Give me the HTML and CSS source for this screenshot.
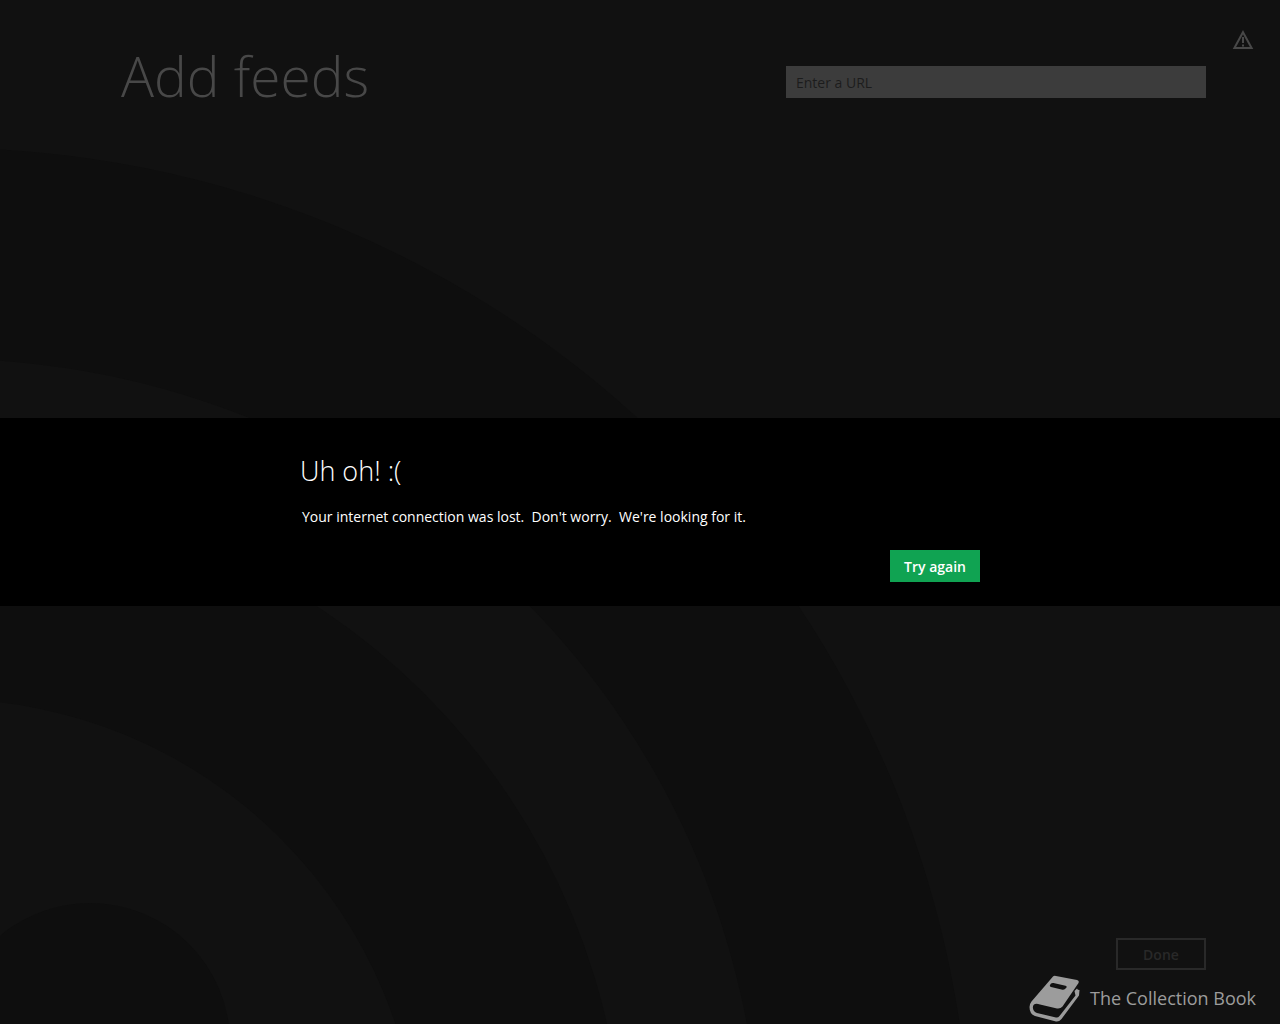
FILE: index.html
```html
<!DOCTYPE html>
<html lang="en">
<head>
  <meta charset="utf-8">
  <title>Add feeds</title>
  <link rel="stylesheet" href="styles.css">
</head>
<body>

  <!-- Big feed symbol behind the page -->
  <svg class="feed-bg" viewBox="0 0 1280 1024" preserveAspectRatio="xMinYMax slice" aria-hidden="true">
    <circle cx="-57" cy="1176" r="1028" fill="#0e0e0e"/>
    <circle cx="-55" cy="1175" r="816" fill="#111"/>
    <circle cx="-56" cy="1175" r="680" fill="#0e0e0e"/>
    <circle cx="-56" cy="1175" r="476" fill="#111"/>
    <circle cx="90" cy="1043" r="140" fill="#0e0e0e"/>
  </svg>

  <div class="page">
    <header class="header">
      <h1>Add feeds</h1>
      <input type="text" class="url-box" id="url" placeholder="Enter a URL" aria-label="Enter a URL">
      <svg class="warning-icon" viewBox="0 0 22 20" role="img" aria-label="Warning">
        <path d="M11 2.2 L19.6 18 H2.4 Z" fill="none" stroke="#484848" stroke-width="2"/>
        <path d="M11 7 V13 M11 14.5 V16.5" stroke="#484848" stroke-width="2"/>
      </svg>
    </header>

    <footer class="footer">
      <button class="done-button" disabled>Done</button>
      <div class="brand">
        <svg class="book-icon" viewBox="0 0 52 48" aria-hidden="true">
          <path fill="#9c9c9c" fill-rule="evenodd" d="M25 2.500 Q26 1.500 28 2 L49 6 Q51.500 6.600 50.500 9 L34.500 32.500 Q32.500 35 29 34.500 L12 30.500 Q8 29 6 30.500 Q4.500 32 5 34.500 Q5.500 37.500 9 39 L28 43.500 Q30 44 31.500 42 L47.500 21.500 L46.500 17 L49 14.500 Q49.500 16 51.500 16 L51 21.500 L33.500 45 Q31 48 28 47.500 L7 42 Q1.500 40 1.500 33 Q1.500 30 3.500 27.500 Z M23 9.500 L22 11 Q21.500 12.500 23 13 L34.500 15.800 Q36 16 37 15 L38.500 13.500 Q39.200 12.300 37.500 11.800 L25.500 9 Q24 8.700 23 9.500 Z"/>
        </svg>
        <span>The Collection Book</span>
      </div>
    </footer>
  </div>

  <!-- Lost connection message -->
  <div class="overlay">
    <div class="dialog" role="alertdialog" aria-labelledby="dialog-title" aria-describedby="dialog-text">
      <div class="dialog-content">
        <h2 id="dialog-title">Uh oh! :(</h2>
        <p id="dialog-text">Your internet connection was lost.  Don't worry.  We're looking for it.</p>
        <button class="retry-button">Try again</button>
      </div>
    </div>
  </div>

</body>
</html>
```
FILE: styles.css
```css
* {
  box-sizing: border-box;
}

body {
  margin: 0;
  background-color: #111;
  font-family: "Segoe UI", "Open Sans", "Noto Sans", sans-serif;
}

.feed-bg {
  position: absolute;
  top: 0;
  left: 0;
  width: 100%;
  height: 100%;
}

.page {
  position: relative;
  display: flex;
  flex-direction: column;
  justify-content: space-between;
  min-height: 100vh;
}

.header {
  display: flex;
  align-items: flex-start;
  padding: 30px 26px 0 121px;
}

h1 {
  flex: 1;
  margin: 14px 0 0;
  color: #484848;
  font-size: 55px;
  font-weight: 300;
  line-height: 64px;
}

.url-box {
  width: 420px;
  height: 32px;
  margin: 36px 26px 0 0;
  padding: 0 10px;
  border: none;
  background-color: #3c3c3c;
  color: #111;
  font-family: inherit;
  font-size: 14px;
}

.url-box::placeholder {
  color: #1c1c1c;
  opacity: 1;
}

.warning-icon {
  width: 22px;
  height: 20px;
}

.footer {
  display: flex;
  flex-direction: column;
  align-items: flex-end;
  padding: 0 24px 2px 0;
}

.done-button {
  width: 90px;
  height: 32px;
  margin: 0 50px 4px 0;
  border: 2px solid #292929;
  background-color: transparent;
  color: #292929;
  font-family: inherit;
  font-size: 14px;
  font-weight: 600;
}

.brand {
  display: flex;
  align-items: center;
  gap: 10px;
  color: #9c9c9c;
  font-size: 18px;
  line-height: 24px;
}

.book-icon {
  width: 52px;
  height: 48px;
}

.overlay {
  position: fixed;
  top: 0;
  left: 0;
  display: flex;
  align-items: center;
  width: 100%;
  height: 100%;
}

.dialog {
  width: 100%;
  padding: 35px 0 24px;
  background-color: #000;
  color: #fff;
}

.dialog-content {
  display: flex;
  flex-direction: column;
  max-width: 680px;
  margin: 0 auto;
}

h2 {
  margin: 0;
  font-size: 27px;
  font-weight: 300;
  line-height: 36px;
}

.dialog p {
  margin: 18px 2px 23px;
  font-size: 14px;
  line-height: 20px;
  white-space: pre-wrap;
}

.retry-button {
  align-self: flex-end;
  height: 32px;
  padding: 0 14px;
  border: none;
  background-color: #10a352;
  color: #fff;
  font-family: inherit;
  font-size: 14px;
  font-weight: 600;
  cursor: pointer;
}
```
